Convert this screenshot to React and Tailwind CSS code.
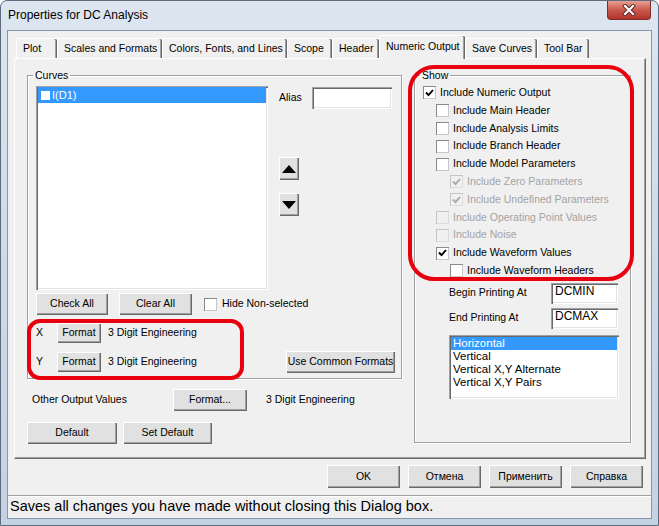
import React from "react";

const raised =
  "bg-[#e1e1e1] shadow-[inset_1px_1px_0_#ffffff,inset_-1px_-1px_0_#696969,inset_-2px_-2px_0_#a0a0a0]";
const sunken =
  "shadow-[inset_1px_1px_0_#a0a0a0,inset_2px_2px_0_#696969,inset_-1px_-1px_0_#ffffff,inset_-2px_-2px_0_#e3e3e3]";

function Btn({ cls, children }) {
  return (
    <div className={`${cls} ${raised} flex items-center justify-center shrink-0 text-black`}>
      {children}
    </div>
  );
}

function Box({ checked, disabled }) {
  return (
    <span
      className={`w-[13px] h-[13px] shrink-0 flex items-center justify-center ${
        disabled
          ? "bg-[#f0f0f0] shadow-[inset_1px_1px_0_#c4c4c4,inset_-1px_-1px_0_#dcdcdc]"
          : "bg-white shadow-[inset_1px_1px_0_#8a8a8a,inset_-1px_-1px_0_#c8c8c8]"
      }`}
    >
      {checked && (
        <svg width="9" height="8" viewBox="0 0 9 8">
          <path
            d="M1 3.5 L3.5 6.2 L8 1"
            fill="none"
            stroke={disabled ? "#a8a8a8" : "#000"}
            strokeWidth="1.9"
          />
        </svg>
      )}
    </span>
  );
}

function Row({ level, checked, disabled, label }) {
  const ml = level === 0 ? "ml-0" : level === 1 ? "ml-[13px]" : "ml-[27px]";
  return (
    <div className={`h-[17.8px] flex items-center gap-[4px] ${ml}`}>
      <Box checked={checked} disabled={disabled} />
      <span className={disabled ? "text-[#a3a3a3]" : "text-black"}>{label}</span>
    </div>
  );
}

const tabs = [
  { t: "Plot", w: "w-[41px]" },
  { t: "Scales and Formats", w: "w-[105px]" },
  { t: "Colors, Fonts, and Lines", w: "w-[125px]" },
  { t: "Scope", w: "w-[45px]" },
  { t: "Header", w: "w-[47px]" },
  { t: "Numeric Output", w: "w-[86px]", active: true },
  { t: "Save Curves", w: "w-[72px]" },
  { t: "Tool Bar", w: "w-[52px]" },
];

const rows = [
  { level: 0, checked: true, label: "Include Numeric Output" },
  { level: 1, label: "Include Main Header" },
  { level: 1, label: "Include Analysis Limits" },
  { level: 1, label: "Include Branch Header" },
  { level: 1, label: "Include Model Parameters" },
  { level: 2, checked: true, disabled: true, label: "Include Zero Parameters" },
  { level: 2, checked: true, disabled: true, label: "Include Undefined Parameters" },
  { level: 1, disabled: true, label: "Include Operating Point Values" },
  { level: 1, disabled: true, label: "Include Noise" },
  { level: 1, checked: true, label: "Include Waveform Values" },
  { level: 2, label: "Include Waveform Headers" },
];

export default function App() {
  return (
    <div className="relative w-[659px] h-[526px] overflow-hidden whitespace-nowrap rounded-t-[7px] border border-[#5c6b7d] bg-linear-to-b from-[#dde6f0] via-[#cfdae7] to-[#c4d2e2] font-['Liberation_Sans',Arial,sans-serif] text-[10.5px] text-black">
      {/* title bar */}
      <div className="h-[29px] flex items-start justify-between">
        <div className="pl-[7px] pt-[6px] text-[12px] leading-[16px] text-black">
          Properties for DC Analysis
        </div>
        <div className="mr-[7px] w-[44px] h-[19px] rounded-b-[4px] border border-t-0 border-[#7a3028] bg-linear-to-b from-[#e6a093] via-[#c9584c] to-[#b2342a] flex items-center justify-center">
          <svg width="14" height="12" viewBox="0 0 14 12">
            <path d="M3 2 L11 10 M11 2 L3 10" stroke="#5a2420" strokeWidth="4" strokeLinecap="square" />
            <path d="M3 2 L11 10 M11 2 L3 10" stroke="#ffffff" strokeWidth="2.2" strokeLinecap="square" />
          </svg>
        </div>
      </div>

      {/* client */}
      <div className="ml-[6px] w-[645px] bg-[#f0f0f0] border border-[#8797ab]">
        {/* tab strip */}
        <div className="pt-[4px] pl-[8px] flex items-end h-[27px]">
          {tabs.map((tb) =>
            tb.active ? (
              <div
                key={tb.t}
                className={`${tb.w} h-[24px] -mb-[1px] relative z-10 bg-[#f0f0f0] rounded-t-[2px] border-t border-l border-t-white border-l-white shadow-[inset_-1px_0_0_#696969,inset_-2px_0_0_#a0a0a0] flex items-center pl-[6px] pb-[2px] shrink-0`}
              >
                {tb.t}
              </div>
            ) : (
              <div
                key={tb.t}
                className={`${tb.w} h-[20px] bg-[#f0f0f0] rounded-t-[2px] border-t border-l border-t-white border-l-white shadow-[inset_-1px_0_0_#696969,inset_-2px_0_0_#a0a0a0] flex items-center pl-[6px] shrink-0`}
              >
                {tb.t}
              </div>
            )
          )}
        </div>

        {/* tab panel */}
        <div className="ml-[6px] w-[632px] h-[401px] border border-t-white border-l-white border-r-[#696969] border-b-[#696969] shadow-[inset_-1px_-1px_0_#a0a0a0] pl-[12px] pt-[10px] flex gap-[12px]">
          {/* left column */}
          <div className="flex flex-col w-[375px]">
            <fieldset className="w-[375px] h-[310px] border border-[#a0a0a0] shadow-[inset_1px_1px_0_#ffffff,1px_1px_0_#ffffff] pl-[8px] pr-[6px] pt-[4px]">
              <legend className="px-[2px] -ml-[3px] leading-[13px]">Curves</legend>
              <div className="flex">
                <div className={`w-[232px] h-[204px] bg-white ${sunken} p-[2px] shrink-0`}>
                  <div className="h-[16px] bg-[#3399ff] flex items-center pl-[3px] gap-[2px] mt-[-1px]">
                    <span className="w-[9px] h-[9px] bg-white" />
                    <span className="text-white text-[11px]">I(D1)</span>
                  </div>
                </div>
                <div className="ml-[11px] flex flex-col">
                  <div className="flex items-center mt-[1px] h-[22px]">
                    <span className="w-[33px]">Alias</span>
                    <div className={`w-[80px] h-[22px] bg-white ${sunken}`} />
                  </div>
                  <Btn cls="mt-[48px] w-[20px] h-[23px]">
                    <svg width="14" height="8" viewBox="0 0 14 8">
                      <path d="M0 8 L7 0 L14 8 Z" fill="#000" />
                    </svg>
                  </Btn>
                  <Btn cls="mt-[13px] w-[20px] h-[23px]">
                    <svg width="14" height="8" viewBox="0 0 14 8">
                      <path d="M0 0 L14 0 L7 8 Z" fill="#000" />
                    </svg>
                  </Btn>
                </div>
              </div>
              <div className="mt-[3px] h-[22px] flex items-center">
                <Btn cls="w-[72px] h-[22px]">Check All</Btn>
                <Btn cls="ml-[11px] w-[73px] h-[22px]">Clear All</Btn>
                <span className="ml-[12px]">
                  <Box />
                </span>
                <span className="ml-[5px]">Hide Non-selected</span>
              </div>
              <div className="mt-[8px] h-[20px] flex items-center">
                <span className="w-[21px]">X</span>
                <Btn cls="w-[44px] h-[20px]">Format</Btn>
                <span className="ml-[7px]">3 Digit Engineering</span>
              </div>
              <div className="mt-[8px] h-[22px] flex items-center justify-between">
                <div className="flex items-center">
                  <span className="w-[21px]">Y</span>
                  <Btn cls="w-[44px] h-[20px]">Format</Btn>
                  <span className="ml-[7px]">3 Digit Engineering</span>
                </div>
                <Btn cls="w-[109px] h-[22px]">Use Common Formats</Btn>
              </div>
            </fieldset>

            <div className="mt-[10px] h-[22px] flex items-center pl-[5px]">
              <span className="w-[141px]">Other Output Values</span>
              <Btn cls="w-[74px] h-[22px]">Format...</Btn>
              <span className="ml-[19px]">3 Digit Engineering</span>
            </div>
            <div className="mt-[11px] flex gap-[6px]">
              <Btn cls="w-[90px] h-[22px]">Default</Btn>
              <Btn cls="w-[89px] h-[22px]">Set Default</Btn>
            </div>
          </div>

          {/* right column */}
          <fieldset className="w-[217px] h-[374px] border border-[#a0a0a0] shadow-[inset_1px_1px_0_#ffffff,1px_1px_0_#ffffff] pl-[8px] pt-[2px]">
            <legend className="px-[2px] -ml-[3px] leading-[13px]">Show</legend>
            {rows.map((r) => (
              <Row key={r.label} {...r} />
            ))}
            <div className="ml-[26px] mt-[3px] flex items-center">
              <span className="w-[102px]">Begin Printing At</span>
              <div className={`w-[67px] h-[21px] bg-white ${sunken} pl-[4px] pt-[2px] leading-[13px] text-[12px]`}>
                DCMIN
              </div>
            </div>
            <div className="ml-[26px] mt-[4px] flex items-center">
              <span className="w-[102px]">End Printing At</span>
              <div className={`w-[67px] h-[21px] bg-white ${sunken} pl-[4px] pt-[2px] leading-[13px] text-[12px]`}>
                DCMAX
              </div>
            </div>
            <div className={`ml-[26px] mt-[6px] w-[170px] h-[64px] bg-white ${sunken} p-[2px] leading-[13px] text-[11.5px]`}>
              <div className="bg-[#3399ff] text-white pl-[2px]">Horizontal</div>
              <div className="pl-[2px]">Vertical</div>
              <div className="pl-[2px]">Vertical X,Y Alternate</div>
              <div className="pl-[2px]">Vertical X,Y Pairs</div>
            </div>
          </fieldset>
        </div>

        {/* dialog buttons */}
        <div className="mt-[6px] flex justify-end gap-[8px] pr-[8px]">
          <Btn cls="w-[73px] h-[23px]">OK</Btn>
          <Btn cls="w-[73px] h-[23px]">Отмена</Btn>
          <Btn cls="w-[73px] h-[23px]">Применить</Btn>
          <Btn cls="w-[73px] h-[23px]">Справка</Btn>
        </div>

        {/* status bar */}
        <div className="mt-[7px] h-[23px] border-t border-[#a0a0a0] shadow-[inset_0_1px_0_#ffffff] pl-[2px] flex items-center text-[14.5px]">
          Saves all changes you have made without closing this Dialog box.
        </div>
      </div>

      {/* red annotations */}
      <div className="absolute left-[407px] top-[64px] w-[226px] h-[216px] rounded-[26px] border-4 border-[#e8000e] pointer-events-none" />
      <div className="absolute left-[26px] top-[318px] w-[217px] h-[61px] rounded-[13px] border-4 border-[#e8000e] pointer-events-none" />
    </div>
  );
}
